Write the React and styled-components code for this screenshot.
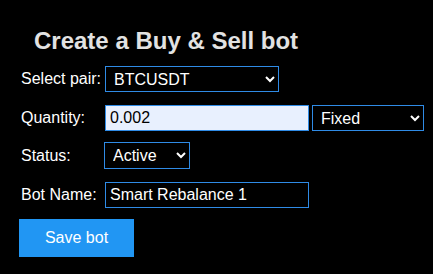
import React from "react";
import styled, { createGlobalStyle } from "styled-components";

const GlobalStyle = createGlobalStyle`
    html, body {
        margin: 0;
        padding: 0;
        background: #000;
        font-family: "Liberation Sans", Arial, sans-serif;
    }
`;

const Page = styled.div`
    background: #000;
    color: #fff;
    width: 433px;
    height: 274px;
    padding: 27px 0 0 19px;
    box-sizing: border-box;
`;

const Title = styled.h2`
    margin: 0 0 11px 15px;
    font-size: 24px;
    line-height: 28px;
    font-weight: bold;
    color: #e2e2e2;
`;

const Form = styled.form`
    display: flex;
    flex-direction: column;
`;

const Row = styled.div`
    display: flex;
    align-items: center;
    padding-left: 2px;
    margin-top: ${(p) => p.$mt || 0}px;
`;

const Label = styled.label`
    width: ${(p) => p.$w || 84}px;
    font-size: 16px;
    color: #fff;
`;

const Select = styled.select`
    width: ${(p) => p.$w}px;
    height: ${(p) => p.$h || 26}px;
    font-family: "Liberation Sans", Arial, sans-serif;
    font-size: 16px;
    color: #fff;
    background: #000;
    border: 1px solid #2f8be6;
    border-radius: 0;
    padding: 0 4px;
    margin-left: ${(p) => p.$ml || 0}px;
    box-sizing: border-box;
`;

const Input = styled.input`
    width: ${(p) => p.$w}px;
    height: ${(p) => p.$h || 26}px;
    font-family: "Liberation Sans", Arial, sans-serif;
    font-size: 16px;
    color: ${(p) => (p.$filled ? "#000" : "#fff")};
    background: ${(p) => (p.$filled ? "#e8f0fe" : "#000")};
    border: 1px solid #2f8be6;
    padding: 0 4px;
    box-sizing: border-box;
    outline: none;
`;

const SaveButton = styled.button`
    width: 115px;
    height: 38px;
    margin-top: 11px;
    background: #2196f3;
    color: #fff;
    border: none;
    font-family: "Liberation Sans", Arial, sans-serif;
    font-size: 16px;
    cursor: pointer;
    align-self: flex-start;
`;

export default function App() {
    return (
        <Page>
            <GlobalStyle />
            <Title>Create a Buy &amp; Sell bot</Title>
            <Form onSubmit={(e) => e.preventDefault()}>
                <Row>
                    <Label>Select pair:</Label>
                    <Select $w={174} defaultValue="BTCUSDT">
                        <option>BTCUSDT</option>
                        <option>ETHUSDT</option>
                    </Select>
                </Row>
                <Row $mt={13}>
                    <Label>Quantity:</Label>
                    <Input $w={204} $filled defaultValue="0.002" />
                    <Select $w={112} $ml={3} defaultValue="Fixed">
                        <option>Fixed</option>
                        <option>Percent</option>
                    </Select>
                </Row>
                <Row $mt={11}>
                    <Label $w={83}>Status:</Label>
                    <Select $w={86} $h={27} defaultValue="Active">
                        <option>Active</option>
                        <option>Inactive</option>
                    </Select>
                </Row>
                <Row $mt={13}>
                    <Label>Bot Name:</Label>
                    <Input $w={204} defaultValue="Smart Rebalance 1" />
                </Row>
                <SaveButton type="submit">Save bot</SaveButton>
            </Form>
        </Page>
    );
}
